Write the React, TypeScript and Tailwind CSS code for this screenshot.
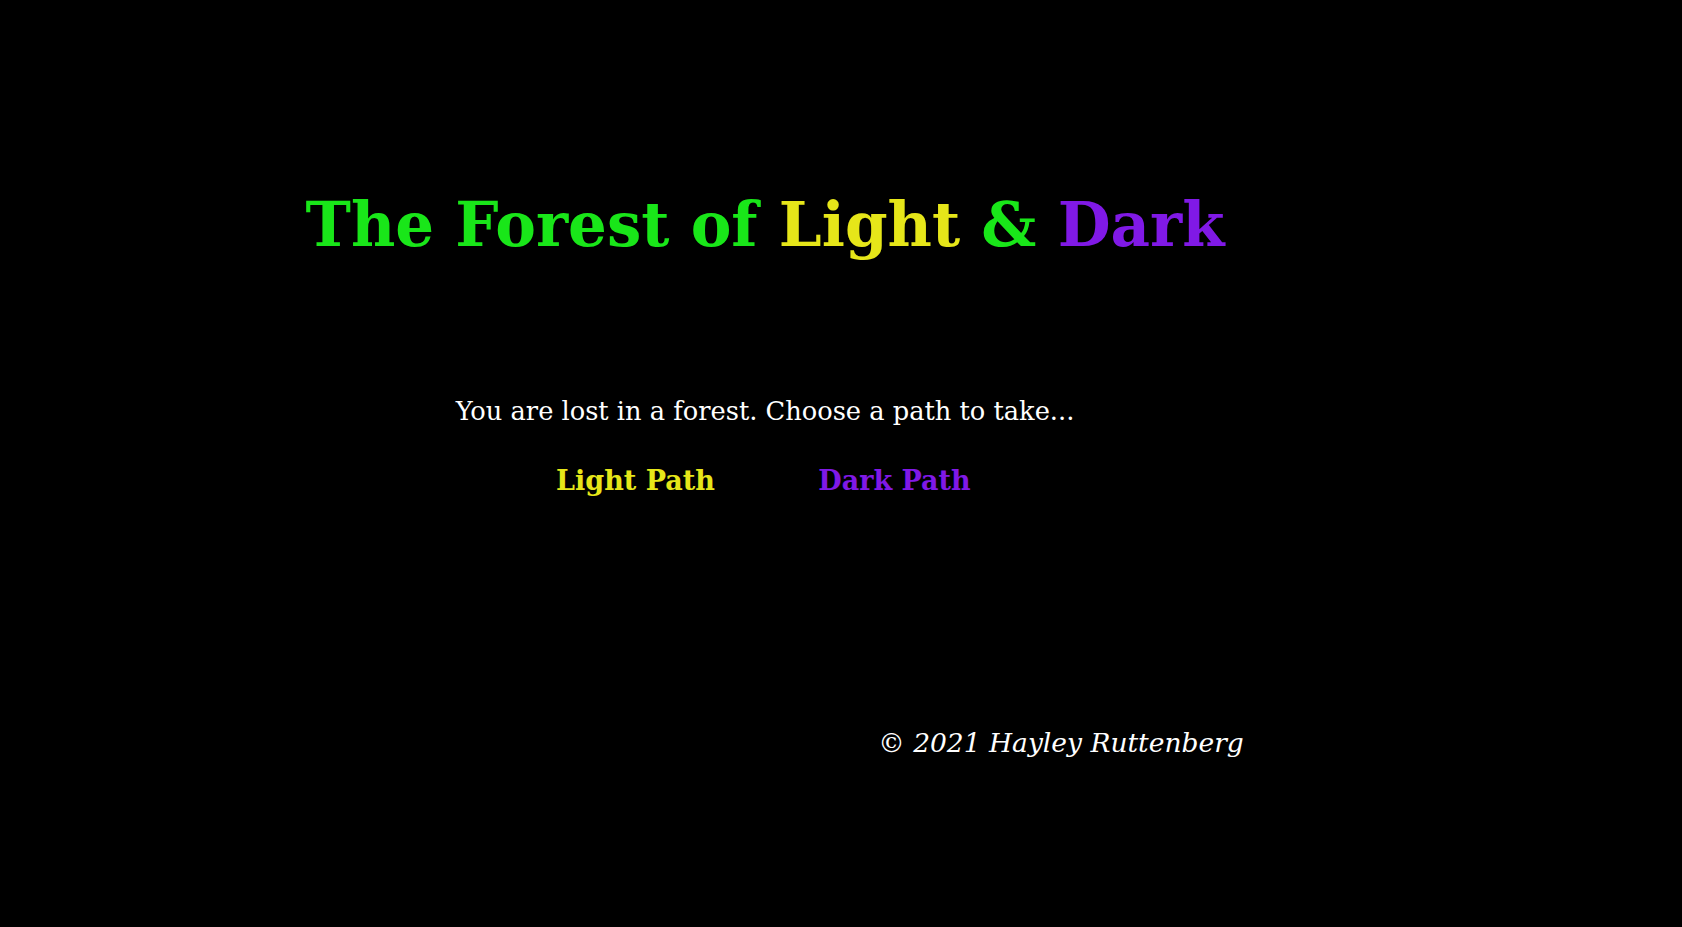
import React from 'react'

export default function App() {
    return (
        <div className="min-h-screen w-full bg-black pt-[194px] font-['DejaVu_Serif',Georgia,serif]">
            {/* Title */}
            <div className="pr-[152px] text-center">
                <h1 className="text-[61px] font-bold leading-none">
                    <span className="text-[#19e619]">The Forest of </span>
                    <span className="text-[#e6e619]">Light</span>
                    <span className="text-[#19e619]"> &amp; </span>
                    <span className="text-[#8019e6]">Dark</span>
                </h1>
            </div>

            {/* Intro */}
            <div className="pr-[152px] text-center mt-[143px]">
                <p className="text-[25.7px] leading-[26px] text-white">
                    You are lost in a forest. Choose a path to take...
                </p>
            </div>

            {/* Paths */}
            <div className="pr-[152px] flex justify-center mt-[43px]">
                <a href="#" className="w-[259px] text-center text-[27px] font-bold leading-none text-[#e6e619]">
                    Light Path
                </a>
                <a href="#" className="w-[259px] text-center text-[27px] font-bold leading-none text-[#8019e6]">
                    Dark Path
                </a>
            </div>

            {/* Footer */}
            <footer className="pl-[440px] flex justify-center mt-[236px]">
                <p className="text-[26.5px] italic leading-none text-white">© 2021 Hayley Ruttenberg</p>
            </footer>
        </div>
    )
}
